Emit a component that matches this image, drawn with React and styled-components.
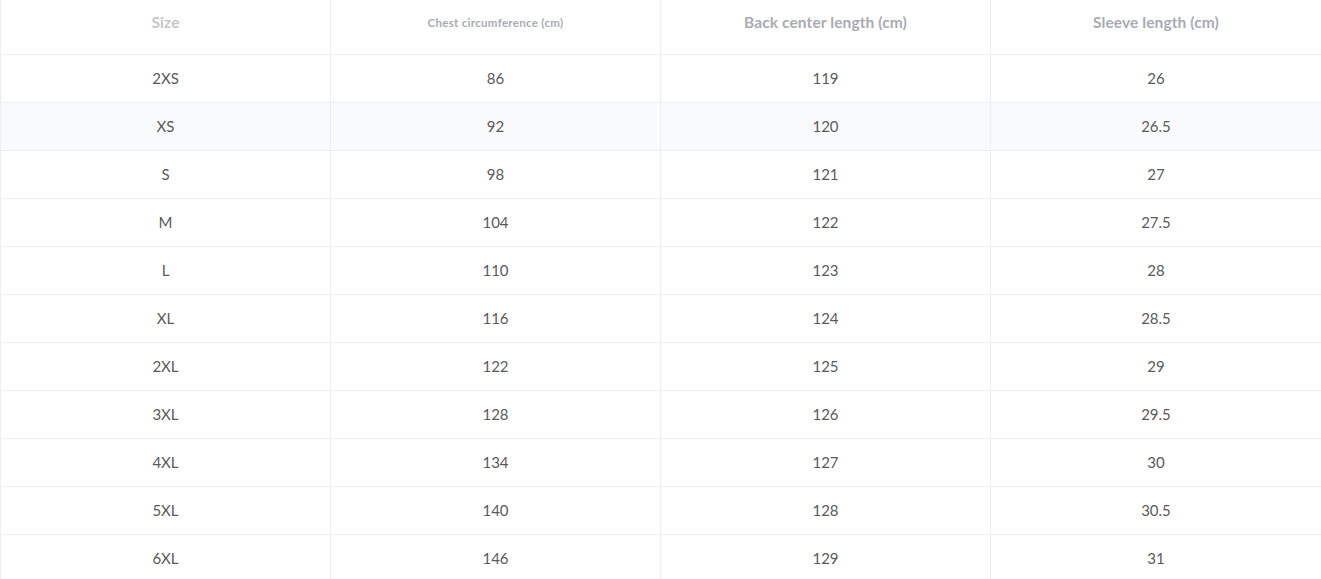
import React from "react";
import styled, { createGlobalStyle } from "styled-components";

const rows = [
  ["2XS", "86", "119", "26"],
  ["XS", "92", "120", "26.5"],
  ["S", "98", "121", "27"],
  ["M", "104", "122", "27.5"],
  ["L", "110", "123", "28"],
  ["XL", "116", "124", "28.5"],
  ["2XL", "122", "125", "29"],
  ["3XL", "128", "126", "29.5"],
  ["4XL", "134", "127", "30"],
  ["5XL", "140", "128", "30.5"],
  ["6XL", "146", "129", "31"],
];

const GlobalStyle = createGlobalStyle`
  body {
    margin: 0;
    background: #fff;
    font-family: Lato, "Open Sans", sans-serif;
  }
`;

const Table = styled.table`
  width: 1321px;
  border-collapse: collapse;
  table-layout: fixed;
`;

const Col = styled.col`
  width: 330px;
  &:last-child {
    width: 331px;
  }
`;

const HeadCell = styled.th`
  height: 44px;
  padding: 0 0 10px;
  border: 1px solid #ebeef5;
  border-top: none;
  text-align: center;
  font-weight: 700;
  font-size: ${(p) => (p.$small ? "11.5px" : "15.5px")};
  color: ${(p) => (p.$light ? "#c4c6cc" : "#a8abb2")};
  letter-spacing: ${(p) => (p.$small ? "0.3px" : "0.1px")};
`;

const Row = styled.tr`
  background: ${(p) => (p.$hover ? "#f9fafc" : "#fff")};
`;

const Cell = styled.td`
  height: 45px;
  padding: 0 0 2px;
  border: 1px solid #ebeef5;
  text-align: center;
  font-size: 15px;
  color: #5a5a5a;
`;

const App = () => {
  return (
    <>
      <GlobalStyle />
      <Table>
        <colgroup>
          <Col />
          <Col />
          <Col />
          <Col />
        </colgroup>
        <thead>
          <tr>
            <HeadCell $light>Size</HeadCell>
            <HeadCell $small>Chest circumference (cm)</HeadCell>
            <HeadCell>Back center length (cm)</HeadCell>
            <HeadCell>Sleeve length (cm)</HeadCell>
          </tr>
        </thead>
        <tbody>
          {rows.map((r, i) => (
            <Row key={r[0]} $hover={i === 1}>
              {r.map((v, j) => (
                <Cell key={j}>{v}</Cell>
              ))}
            </Row>
          ))}
        </tbody>
      </Table>
    </>
  );
};

export default App;
